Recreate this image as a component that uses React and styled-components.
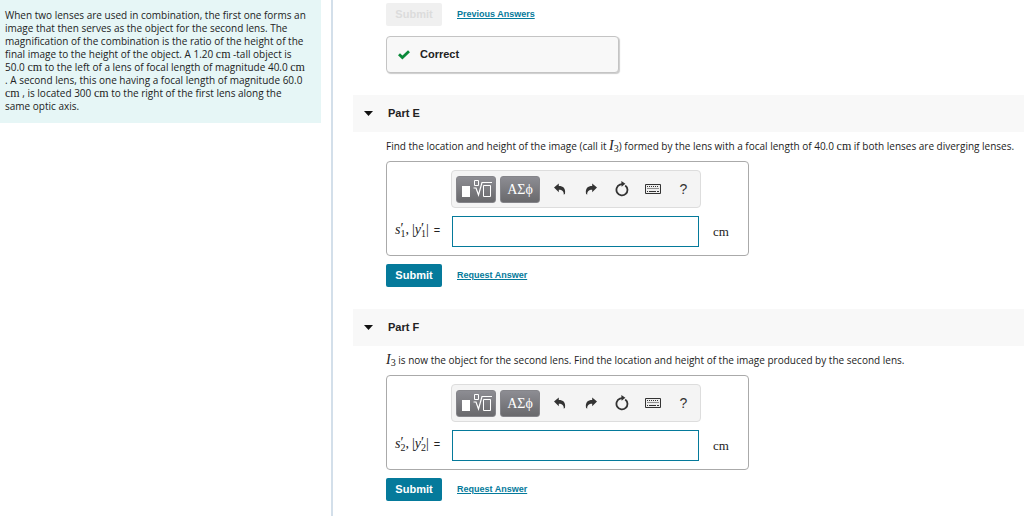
import styled, { createGlobalStyle, ThemeProvider } from 'styled-components'

const theme = {
    color: {
        text: '#222',
        accent: '#057a9b',
        intro: '#e6f6f6',
        divider: '#d3dfea',
        band: '#f8f8f8',
        toolbar: '#f4f4f4',
        correct: '#0b8a3a',
    },
    font: {
        sans: '"Liberation Sans", Arial, sans-serif',
        copy: '"Open Sans", "Liberation Sans", Arial, sans-serif',
        math: '"Liberation Serif", "Times New Roman", serif',
    },
}

const GlobalStyle = createGlobalStyle`
    *, *::before, *::after {
        box-sizing: border-box;
    }

    body {
        margin: 0;
        background: #fff;
        color: ${theme.color.text};
        font-family: ${theme.font.sans};
        font-size: 11px;
        line-height: 13px;
    }

    p, h2 {
        margin: 0;
    }

    button, input {
        font: inherit;
    }
`

const Page = styled.div`
    display: grid;
    grid-template-columns: 333px minmax(0, 1fr);
    min-height: 100vh;
`

const Sidebar = styled.aside`
    padding-right: 10px;
    border-right: 2px solid ${props => props.theme.color.divider};
`

const Copy = styled.p`
    font-family: ${props => props.theme.font.copy};
    font-size: 10px;
`

const Intro = styled(Copy)`
    padding: 9px 14px 10px 5px;
    background: ${props => props.theme.color.intro};
`

const Main = styled.main`
    padding: 3px 0 15px 20px;
`

const Unit = styled.span`
    font-family: ${props => props.theme.font.math};
    font-size: 12px;
    line-height: 1;
`

const Actions = styled.div`
    display: flex;
    align-items: center;
    gap: 15px;
    padding-left: 33px;
`

const SubmitButton = styled.button`
    width: 56px;
    height: 23px;
    border: 0;
    border-radius: 2px;
    padding: 0;
    background: ${props => props.theme.color.accent};
    color: #fff;
    font-size: 11px;
    font-weight: 700;

    &:disabled {
        background: #f0f0f0;
        color: #dcdcdc;
    }
`

const AnswerLink = styled.a`
    color: ${props => props.theme.color.accent};
    font-size: 9px;
    font-weight: 700;
    text-decoration: underline;
`

const Feedback = styled.div`
    display: flex;
    align-items: center;
    gap: 10px;
    width: 233px;
    height: 37px;
    margin: 10px 0 22px 33px;
    border: 1px solid #c4c4c4;
    border-radius: 4px;
    padding-left: 11px;
    background: ${props => props.theme.color.band};
    box-shadow: 1px 1px 1px #ccc;
    font-weight: 700;
`

const PartHeader = styled.h2`
    display: flex;
    align-items: center;
    gap: 15px;
    height: 37px;
    padding-left: 11px;
    background: ${props => props.theme.color.band};
    font-size: 11px;
    font-weight: 700;
`

const PartBody = styled.div`
    padding: 7px 0 8px 33px;
`

const Question = styled(Copy)`
    margin-bottom: 8px;
    line-height: 14px;
`

const Part = styled.section`
    & + & {
        margin-top: 22px;
    }
`

const AnswerBox = styled.div`
    display: grid;
    grid-template-columns: 56px 250px 1fr;
    align-items: center;
    row-gap: 8px;
    width: 363px;
    border: 1px solid #aaa;
    border-radius: 4px;
    padding: 8px;
`

const Toolbar = styled.div`
    grid-column: 2;
    display: flex;
    align-items: center;
    height: 38px;
    border: 1px solid #ddd;
    border-radius: 4px;
    padding-left: 4px;
    background: ${props => props.theme.color.toolbar};
`

const PaletteButton = styled.button`
    display: flex;
    flex-shrink: 0;
    align-items: center;
    justify-content: center;
    width: 40px;
    height: 27px;
    margin-right: 4px;
    border: 1px solid #85858a;
    border-radius: 3px;
    padding: 0;
    background: linear-gradient(#8d8d93, #69696c);
    color: #fff;
    font-family: ${props => props.theme.font.math};
    font-size: 14px;
`

const ToolButton = styled.button`
    display: flex;
    flex-shrink: 0;
    align-items: center;
    justify-content: center;
    width: 31px;
    height: 27px;
    border: 0;
    padding: 0;
    background: none;
    color: #333;
    font-size: 14px;
`

const AnswerLabel = styled.label`
    grid-column: 1;
    display: flex;
    align-items: center;
    padding-bottom: 3px;
    white-space: nowrap;
`

const AnswerInput = styled.input`
    width: 247px;
    height: 31px;
    margin-left: 1px;
    border: 1px solid ${props => props.theme.color.accent};
    padding: 0 6px;
    background: #fff;
`

const AnswerUnit = styled(Unit)`
    padding-left: 12px;
    font-size: 13px;
`

const Formula = styled.span`
    display: inline-flex;
    align-items: center;
    margin-right: 5px;
    font-family: ${props => props.theme.font.math};
    font-size: 14px;
    line-height: 14px;
`

const Scripts = styled.span`
    display: inline-flex;
    flex-direction: column;
    font-size: 10px;
    line-height: 8px;
`

const Prime = styled.span`
    margin: 3px 0 -3px;
    font-size: 14px;
`

const Comma = styled.span`
    margin-right: 3px;
`

const Variable = styled.i`
    font-family: ${props => props.theme.font.math};
    font-size: 14px;
    line-height: 1;

    sub {
        font-size: 10px;
        font-style: normal;
        line-height: 0;
        vertical-align: -2px;
    }
`

const CheckIcon = () => (
    <svg width="12" height="10" viewBox="0 0 12 10" aria-hidden="true">
        <path d="M1 4.2 4.4 7.6 11 1.3" fill="none" stroke={theme.color.correct} strokeWidth="2.8" />
    </svg>
)

const CaretIcon = () => (
    <svg width="9" height="5" viewBox="0 0 9 5" aria-hidden="true">
        <path d="M0 0h9L4.5 5z" fill="#111" />
    </svg>
)

const TemplateIcon = () => (
    <svg width="32" height="20" viewBox="0 0 32 20" fill="none" stroke="#fff" aria-hidden="true">
        <path d="M2 7h8v11H2z" fill="#fff" stroke="none" />
        <path d="M14.5 1.5h4v5h-4zM23.5 6.5h7v11h-7z" strokeWidth="1" />
        <path d="m13.5 9 2.5 0 2.5 7L22 3.5h10" strokeWidth="1.2" />
    </svg>
)

const UndoIcon = () => (
    <svg width="12" height="12" viewBox="0 0 12 12" aria-hidden="true">
        <path d="M0 4.6 4.8.6v2.5c4.5 0 7 2.4 6.2 7.6l-1.2 1c.1-3.5-1.5-5-5-5v2.6z" fill="#333" />
    </svg>
)

const RedoIcon = () => (
    <svg width="12" height="12" viewBox="0 0 12 12" aria-hidden="true">
        <path d="M12 4.6 7.2.6v2.5C2.7 3.1.2 5.5 1 10.7l1.2 1c-.1-3.5 1.5-5 5-5v2.6z" fill="#333" />
    </svg>
)

const ResetIcon = () => (
    <svg width="14" height="16" viewBox="0 0 14 16" aria-hidden="true">
        <path d="M10.2 4.4a5.5 5.5 0 1 1-5.2-.7l2.4-.6" fill="none" stroke="#333" strokeWidth="1.8" />
        <path d="M6.3 0 10.4 2.8 6.6 5.8z" fill="#333" />
    </svg>
)

const KeyboardIcon = () => (
    <svg width="16" height="10" viewBox="0 0 16 10" fill="none" stroke="#333" aria-hidden="true">
        <path d="M.5.5h15v9H.5z" fill="#eee" />
        <path d="M2 2.5h12M2.5 4.5h12" strokeDasharray="1 1" />
        <path d="M2 7.5h1M4 7.5h7M12 7.5h2" />
    </svg>
)

const parts = [
    {
        id: 'E',
        index: 1,
        question: (
            <>
                Find the location and height of the image (call it <Variable>I<sub>3</sub></Variable>) formed by
                the lens with a focal length of 40.0 <Unit>cm</Unit> if both lenses are diverging lenses.
            </>
        ),
    },
    {
        id: 'F',
        index: 2,
        question: (
            <>
                <Variable>I<sub>3</sub></Variable> is now the object for the second lens. Find the location and
                height of the image produced by the second lens.
            </>
        ),
    },
]

function AnswerFormula({ index }) {
    const scripts = <Scripts><Prime>′</Prime><span>{index}</span></Scripts>

    return (
        <Formula>
            <i>s</i>{scripts}<Comma>,</Comma>|<i>y</i>{scripts}|
        </Formula>
    )
}

function AnswerForm({ id, index }) {
    const inputId = `answer-${id}`

    return (
        <AnswerBox>
            <Toolbar>
                <PaletteButton type="button" aria-label="Templates"><TemplateIcon /></PaletteButton>
                <PaletteButton type="button">ΑΣϕ</PaletteButton>
                <ToolButton type="button" aria-label="Undo"><UndoIcon /></ToolButton>
                <ToolButton type="button" aria-label="Redo"><RedoIcon /></ToolButton>
                <ToolButton type="button" aria-label="Reset"><ResetIcon /></ToolButton>
                <ToolButton type="button" aria-label="Keyboard shortcuts"><KeyboardIcon /></ToolButton>
                <ToolButton type="button">?</ToolButton>
            </Toolbar>
            <AnswerLabel htmlFor={inputId}><AnswerFormula index={index} />=</AnswerLabel>
            <AnswerInput id={inputId} type="text" />
            <AnswerUnit>cm</AnswerUnit>
        </AnswerBox>
    )
}

export default function App() {
    return (
        <ThemeProvider theme={theme}>
            <GlobalStyle />
            <Page>
                <Sidebar>
                    <Intro>
                        When two lenses are used in combination, the first one forms an image that then serves as
                        the object for the second lens. The magnification of the combination is the ratio of the
                        height of the final image to the height of the object. A 1.20 <Unit>cm</Unit> -tall object
                        is 50.0 <Unit>cm</Unit> to the left of a lens of focal length of magnitude
                        40.0 <Unit>cm</Unit> . A second lens, this one having a focal length of magnitude
                        60.0 <Unit>cm</Unit> , is located 300 <Unit>cm</Unit> to the right of the first lens along
                        the same optic axis.
                    </Intro>
                </Sidebar>
                <Main>
                    <Actions>
                        <SubmitButton type="button" disabled>Submit</SubmitButton>
                        <AnswerLink href="#previous">Previous Answers</AnswerLink>
                    </Actions>
                    <Feedback><CheckIcon />Correct</Feedback>
                    {parts.map(({ id, index, question }) => (
                        <Part key={id}>
                            <PartHeader><CaretIcon />Part {id}</PartHeader>
                            <PartBody>
                                <Question>{question}</Question>
                                <AnswerForm id={id} index={index} />
                            </PartBody>
                            <Actions>
                                <SubmitButton type="button">Submit</SubmitButton>
                                <AnswerLink href="#request">Request Answer</AnswerLink>
                            </Actions>
                        </Part>
                    ))}
                </Main>
            </Page>
        </ThemeProvider>
    )
}
